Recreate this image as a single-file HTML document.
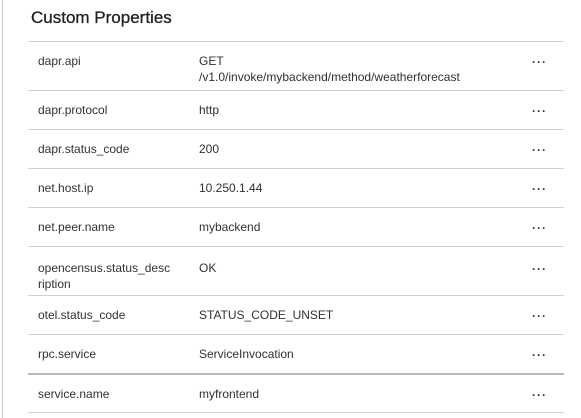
<html><head><style>
body{margin:0;width:581px;height:418px;background:#fff;font-family:"Liberation Sans",sans-serif;color:#323130;position:relative;overflow:hidden}
.lb{position:absolute;left:2px;top:0;width:1px;height:418px;background:#c8c8c8}
h1{position:absolute;left:31px;top:8px;margin:0;font-size:17px;font-weight:normal;color:#222;-webkit-text-stroke:0.3px #222}
.l{position:absolute;left:28px;width:536px;height:1px;background:#d0d0d0}
.t{position:absolute;font-size:12px;line-height:16px;white-space:nowrap}
.d{position:absolute;left:532px;font-size:12px;letter-spacing:1px;font-weight:bold}
</style></head><body>
<div class="lb"></div>
<h1>Custom Properties</h1>
<div class="l" style="top:41px"></div>
<div class="l" style="top:90px"></div>
<div class="l" style="top:129px"></div>
<div class="l" style="top:168px"></div>
<div class="l" style="top:207px"></div>
<div class="l" style="top:246px"></div>
<div class="l" style="top:295px"></div>
<div class="l" style="top:334px"></div>
<div class="l" style="top:373px;height:2px;background:#bbb"></div>
<div class="l" style="top:412px"></div>

<div class="t" style="left:38px;top:53px">dapr.api</div>
<div class="t" style="left:199px;top:53px">GET<br>/v1.0/invoke/mybackend/method/weatherforecast</div>
<div class="d" style="top:55px">···</div>

<div class="t" style="left:38px;top:102px">dapr.protocol</div>
<div class="t" style="left:199px;top:102px">http</div>
<div class="d" style="top:104px">···</div>

<div class="t" style="left:38px;top:141px">dapr.status_code</div>
<div class="t" style="left:199px;top:141px">200</div>
<div class="d" style="top:143px">···</div>

<div class="t" style="left:38px;top:180px">net.host.ip</div>
<div class="t" style="left:199px;top:180px">10.250.1.44</div>
<div class="d" style="top:182px">···</div>

<div class="t" style="left:38px;top:219px">net.peer.name</div>
<div class="t" style="left:199px;top:219px">mybackend</div>
<div class="d" style="top:221px">···</div>

<div class="t" style="left:38px;top:260px">opencensus.status_desc<br>ription</div>
<div class="t" style="left:199px;top:260px">OK</div>
<div class="d" style="top:262px">···</div>

<div class="t" style="left:38px;top:307px">otel.status_code</div>
<div class="t" style="left:199px;top:307px">STATUS_CODE_UNSET</div>
<div class="d" style="top:309px">···</div>

<div class="t" style="left:38px;top:346px">rpc.service</div>
<div class="t" style="left:199px;top:346px">ServiceInvocation</div>
<div class="d" style="top:348px">···</div>

<div class="t" style="left:38px;top:386px">service.name</div>
<div class="t" style="left:199px;top:386px">myfrontend</div>
<div class="d" style="top:388px">···</div>
</body></html>
